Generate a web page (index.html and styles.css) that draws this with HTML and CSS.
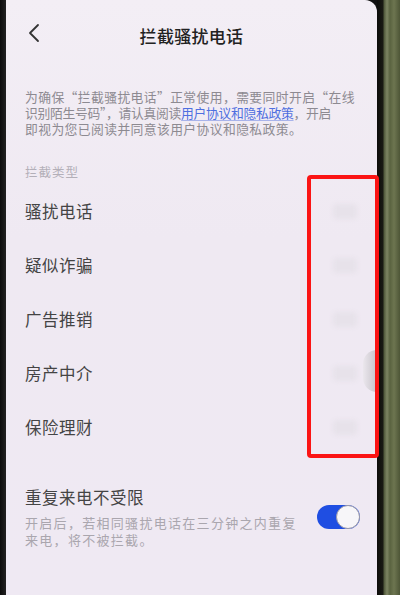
FILE: index.html
```html
<!DOCTYPE html>
<html lang="zh-CN">
<head>
<meta charset="utf-8">
<title>拦截骚扰电话</title>
<link rel="stylesheet" href="styles.css">
</head>
<body>
<div class="phone">
  <div class="bezel-left"></div>
  <div class="screen">
    <header class="topbar">
      <svg class="back" width="14" height="20" viewBox="0 0 14 20"><path d="M11 2 L3 10 L11 18" fill="none" stroke="#333" stroke-width="1.8" stroke-linecap="round" stroke-linejoin="round"/></svg>
      <h1 class="title">拦截骚扰电话</h1>
    </header>
    <p class="notice">为确保“拦截骚扰电话”正常使用，需要同时开启“在线<br><span class="tight">识别陌生号码”，请认真阅读<span class="link">用户协议和隐私政策</span>，开启</span><br>即视为您已阅读并同意该用户协议和隐私政策。</p>
    <div class="section-label">拦截类型</div>
    <ul class="types">
      <li class="type-row"><span>骚扰电话</span><i class="ghost-toggle"></i></li>
      <li class="type-row"><span>疑似诈骗</span><i class="ghost-toggle"></i></li>
      <li class="type-row"><span>广告推销</span><i class="ghost-toggle"></i></li>
      <li class="type-row"><span>房产中介</span><i class="ghost-toggle"></i></li>
      <li class="type-row"><span>保险理财</span><i class="ghost-toggle"></i></li>
    </ul>
    <div class="repeat-row">
      <div class="repeat-text">
        <div class="repeat-title">重复来电不受限</div>
        <div class="repeat-desc">开启后，若相同骚扰电话在三分钟之内重复<br>来电，将不被拦截。</div>
      </div>
      <div class="switch-on"><span class="knob"></span></div>
    </div>
    <div class="edge-handle"></div>
    <div class="highlight"></div>
  </div>
  <div class="bezel-right"></div>
</div>
</body>
</html>
```
FILE: styles.css
```css
* { box-sizing: border-box; }
html, body { margin: 0; padding: 0; }
body {
  width: 400px;
  height: 595px;
  overflow: hidden;
  background: #111;
  font-family: "Noto Sans CJK SC", "Noto Sans", sans-serif;
}
.phone {
  display: flex;
  width: 400px;
  height: 595px;
}
.bezel-left {
  width: 6px;
  background: linear-gradient(to right, #0b0b0b, #222);
}
.screen {
  position: relative;
  width: 371px;
  height: 595px;
  background: linear-gradient(to bottom, #f3eef5, #efe9f2 40%, #efe9f3);
  border-top-right-radius: 12px;
  padding-left: 19px;
}
.bezel-right {
  flex: 1;
  background: linear-gradient(to right, #0c0c0a 0, #1a1a14 6px, #4f573a 7px, #7d8462 10px, #5a6340 13px, #6d7550 17px, #4e5637 23px);
}
.topbar {
  position: relative;
  height: 70px;
  display: flex;
  align-items: center;
  justify-content: center;
  padding-right: 19px;
}
.back {
  position: absolute;
  left: 2px;
  top: 23px;
}
.title {
  margin: 0;
  font-size: 17px;
  font-weight: 500;
  color: #222;
  letter-spacing: 0.3px;
}
.notice {
  margin: 19px 0 0;
  font-size: 12.8px;
  line-height: 16px;
  color: #8d8a91;
  letter-spacing: 0.4px;
  white-space: nowrap;
  font-feature-settings: "fwid" 1;
}
.tight { letter-spacing: -0.3px; }
.link {
  color: #4f6fe0;
  text-decoration: underline;
  text-decoration-color: rgba(79, 111, 224, 0.45);
  text-underline-offset: 2px;
}
.section-label {
  margin-top: 27px;
  font-size: 12.5px;
  line-height: 16px;
  color: #b3afb8;
  letter-spacing: 1px;
}
.types {
  list-style: none;
  margin: 4px 0 0;
  padding: 0;
}
.type-row {
  height: 54px;
  display: flex;
  align-items: center;
  justify-content: space-between;
  padding-right: 20px;
  font-size: 16.5px;
  color: #444;
  letter-spacing: 0.5px;
}
.ghost-toggle {
  display: block;
  width: 24px;
  height: 15px;
  border-radius: 4px;
  background: #e7e2ea;
  filter: blur(2px);
}
.repeat-row {
  margin-top: 31px;
  display: flex;
  align-items: flex-start;
  justify-content: space-between;
  padding-right: 17px;
}
.repeat-title {
  font-size: 16.5px;
  line-height: 24px;
  color: #444;
  letter-spacing: 0.5px;
}
.repeat-desc {
  margin-top: 5px;
  font-size: 13px;
  line-height: 17px;
  color: #aaa6ae;
  letter-spacing: 1.3px;
  white-space: nowrap;
}
.switch-on {
  margin-top: 20px;
  width: 43px;
  height: 24px;
  border-radius: 12px;
  background: #1f4ee2;
  position: relative;
}
.knob {
  position: absolute;
  right: 0;
  top: 0;
  width: 24px;
  height: 24px;
  border-radius: 50%;
  background: #f7f6f9;
  border: 1px solid #9a98a6;
}
.edge-handle {
  position: absolute;
  right: 0;
  top: 350px;
  width: 14px;
  height: 42px;
  border-radius: 21px 0 0 21px;
  background: linear-gradient(to right, #ebe7ed, #c6c2c9);
}
.highlight {
  position: absolute;
  left: 301px;
  top: 175px;
  width: 72px;
  height: 283px;
  border: 4px solid #fb1414;
  border-radius: 4px;
}
```
